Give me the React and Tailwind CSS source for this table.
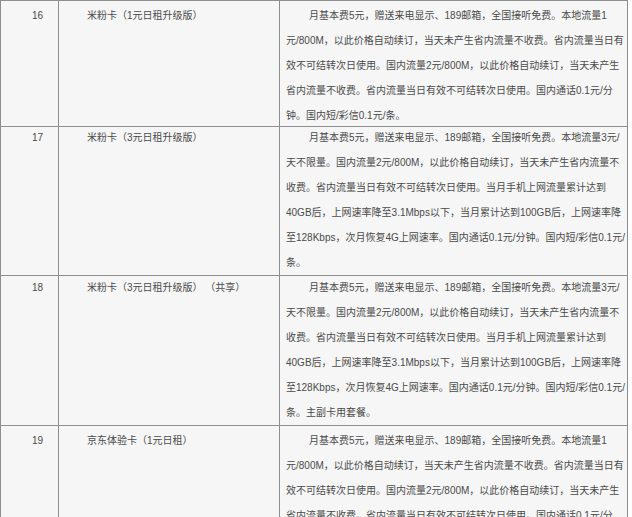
const base = '月基本费5元，赠送来电显示、189邮箱，全国接听免费。';

const rows = [
  {
    no: '16',
    name: '米粉卡（1元日租升级版）',
    h: 'h-[126px]',
    pad: 'pt-[2px]',
    lines: [
      base + '本地流量1',
      '元/800M，以此价格自动续订，当天未产生省内流量不收费。省内流量当日有',
      '效不可结转次日使用。国内流量2元/800M，以此价格自动续订，当天未产生',
      '省内流量不收费。省内流量当日有效不可结转次日使用。国内通话0.1元/分',
      '钟。国内短/彩信0.1元/条。',
    ],
  },
  {
    no: '17',
    name: '米粉卡（3元日租升级版）',
    h: 'h-[149px]',
    pad: '-mt-[2px]',
    lines: [
      base + '本地流量3元/',
      '天不限量。国内流量2元/800M，以此价格自动续订，当天未产生省内流量不',
      '收费。省内流量当日有效不可结转次日使用。当月手机上网流量累计达到',
      '40GB后，上网速率降至3.1Mbps以下，当月累计达到100GB后，上网速率降',
      '至128Kbps，次月恢复4G上网速率。国内通话0.1元/分钟。国内短/彩信0.1元/',
      '条。',
    ],
  },
  {
    no: '18',
    name: '米粉卡（3元日租升级版） （共享）',
    h: 'h-[150px]',
    pad: '-mt-[1px]',
    lines: [
      base + '本地流量3元/',
      '天不限量。国内流量2元/800M，以此价格自动续订，当天未产生省内流量不',
      '收费。省内流量当日有效不可结转次日使用。当月手机上网流量累计达到',
      '40GB后，上网速率降至3.1Mbps以下，当月累计达到100GB后，上网速率降',
      '至128Kbps，次月恢复4G上网速率。国内通话0.1元/分钟。国内短/彩信0.1元/',
      '条。主副卡用套餐。',
    ],
  },
  {
    no: '19',
    name: '京东体验卡（1元日租）',
    h: 'h-[140px]',
    pad: 'pt-[2px]',
    lines: [
      base + '本地流量1',
      '元/800M，以此价格自动续订，当天未产生省内流量不收费。省内流量当日有',
      '效不可结转次日使用。国内流量2元/800M，以此价格自动续订，当天未产生',
      '省内流量不收费。省内流量当日有效不可结转次日使用。国内通话0.1元/分',
      '钟。国内短/彩信0.1元/条。',
    ],
  },
];

export default function App() {
  return (
    <div className="w-[632px] h-[517px] overflow-hidden bg-white font-['Liberation_Sans','Noto_Sans_CJK_SC',sans-serif] text-[10px] leading-[25px] text-[#4a4a4a]">
      <div className="w-[628px] border-r border-[#8e8e8e]">
        {rows.map((r) => (
          <div
            key={r.no}
            className={`grid grid-cols-[58px_221px_349px] border-t border-[#8e8e8e] bg-[#f6f6f6] ${r.h}`}
          >
            <div className={`border-l border-[#8e8e8e] pl-[31px] whitespace-nowrap ${r.pad}`}>{r.no}</div>
            <div className={`border-l border-[#8e8e8e] pl-[28px] whitespace-nowrap ${r.pad}`}>{r.name}</div>
            <div className={`border-l border-[#8e8e8e] pl-[6px] whitespace-nowrap ${r.pad}`}>
              {r.lines.map((line, i) => (
                <div key={i} className={i === 0 ? 'pl-[23px]' : ''}>
                  {line}
                </div>
              ))}
            </div>
          </div>
        ))}
      </div>
    </div>
  );
}
